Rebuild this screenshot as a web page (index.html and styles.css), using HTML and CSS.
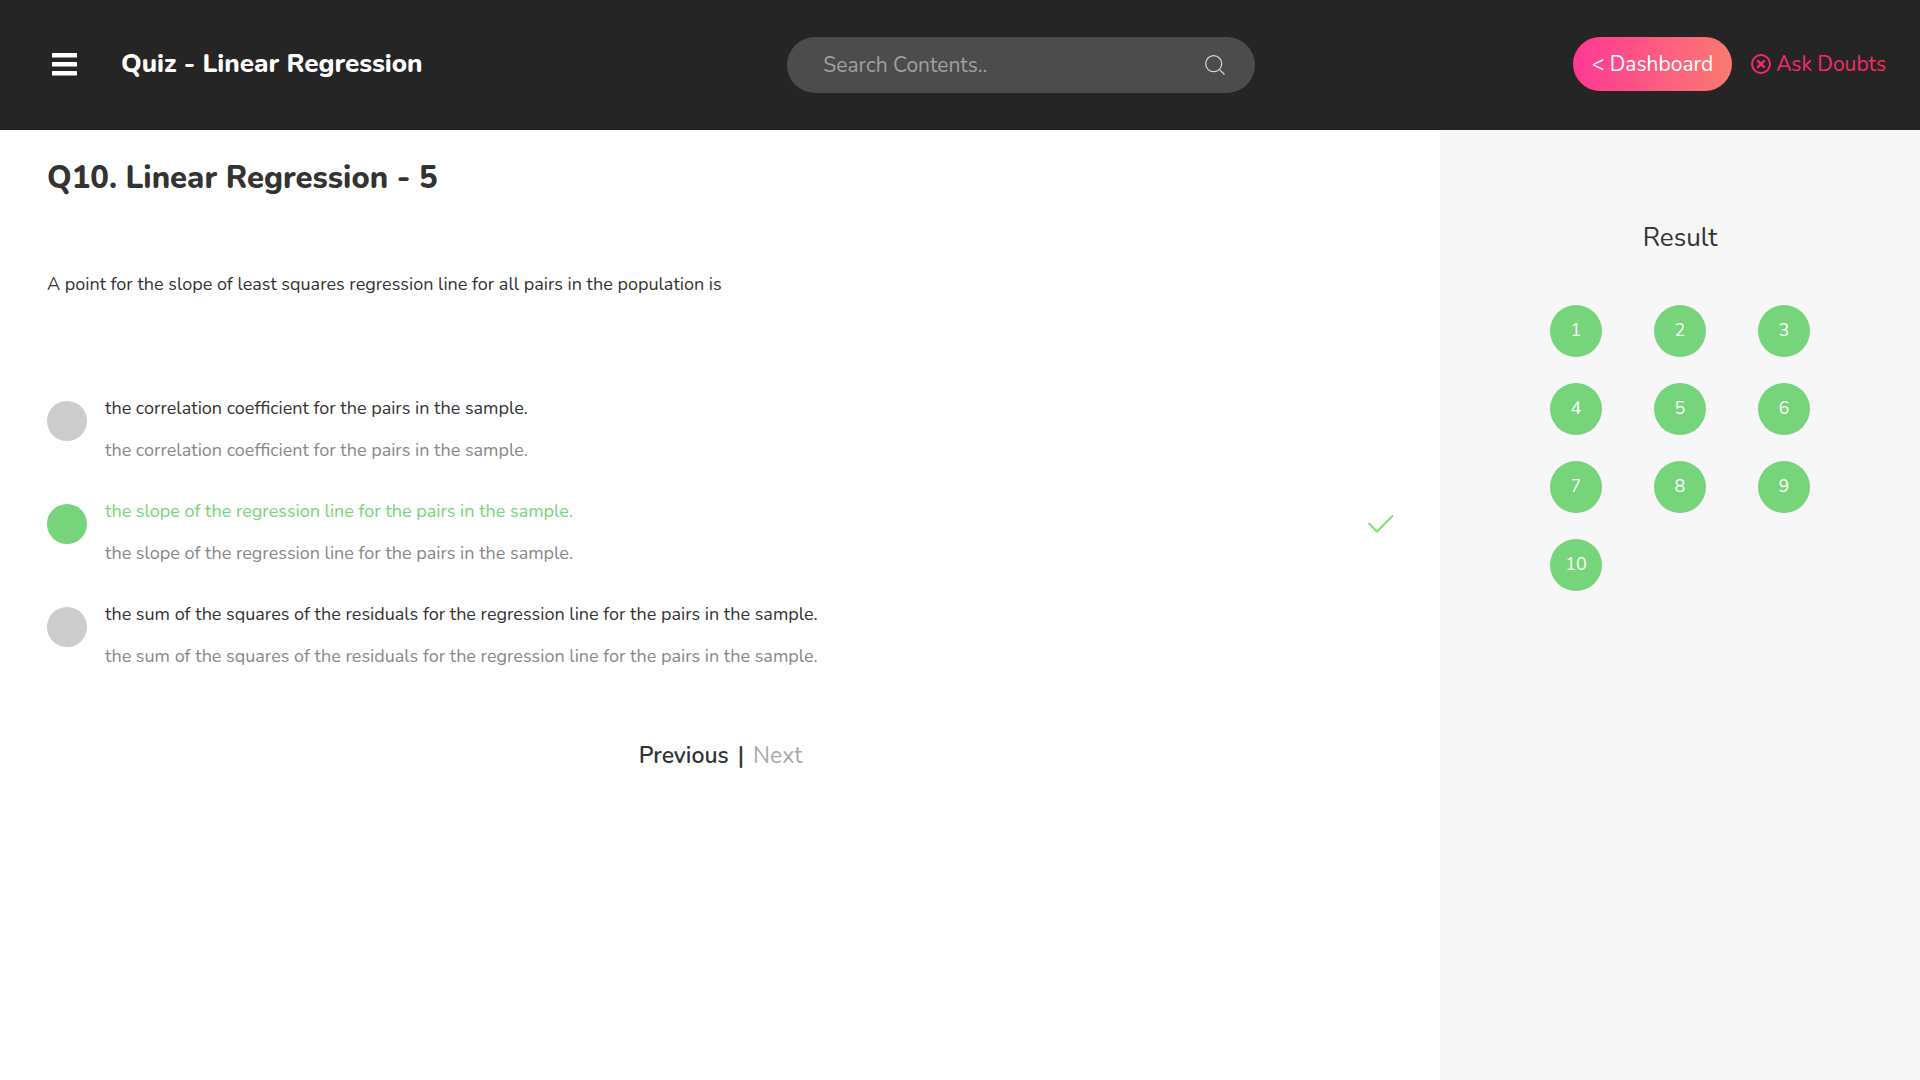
FILE: index.html
```html
<!DOCTYPE html>
<html lang="en">
<head>
<meta charset="utf-8">
<meta name="viewport" content="width=device-width, initial-scale=1">
<title>Quiz - Linear Regression</title>
<link rel="stylesheet" href="styles.css">
</head>
<body>
<header class="topbar">
  <div class="topbar-start">
    <button class="menu-button" type="button" aria-label="Menu">
      <svg width="26" height="24" viewBox="0 0 26 24" fill="#fff" aria-hidden="true"><rect x="0" y="1" width="25" height="4.5" rx=".5"/><rect x="0" y="10" width="25" height="4.5" rx=".5"/><rect x="0" y="19" width="25" height="4.5" rx=".5"/></svg>
    </button>
    <h1 class="topbar-title">Quiz - Linear Regression</h1>
  </div>
  <form class="search" role="search">
    <input class="search-input" type="search" placeholder="Search Contents.." aria-label="Search Contents">
    <button class="search-button" type="submit" aria-label="Search">
      <svg width="20" height="20" viewBox="0 0 20 20" fill="none" stroke="#d8d8d8" stroke-width="1.2" aria-hidden="true"><circle cx="8.7" cy="8.7" r="8"/><path d="M14.3 14.3L19.5 19.5"/></svg>
    </button>
  </form>
  <nav class="topbar-end">
    <a class="dashboard-link" href="#">&lt; Dashboard</a>
    <a class="doubts-link" href="#">
      <svg width="20" height="20" viewBox="0 0 20 20" fill="none" stroke="#f72a66" aria-hidden="true"><circle cx="10" cy="10" r="9" stroke-width="2"/><path d="M6.4 6.4L13.6 13.6M13.6 6.4L6.4 13.6" stroke-width="2.4"/></svg>
      Ask Doubts</a>
  </nav>
</header>
<div class="layout">
  <main class="question">
    <h2 class="question-title">Q10. Linear Regression - 5</h2>
    <p class="question-text" id="question">A point for the slope of least squares regression line for all pairs in the population is</p>
    <div class="options" role="radiogroup" aria-labelledby="question">
      <div class="option">
        <input class="option-radio" type="radio" name="answer" id="answer-1">
        <div class="option-body">
          <label class="option-label" for="answer-1">the correlation coefficient for the pairs in the sample.</label>
          <p class="option-note">the correlation coefficient for the pairs in the sample.</p>
        </div>
      </div>
      <div class="option">
        <input class="option-radio" type="radio" name="answer" id="answer-2" checked>
        <div class="option-body">
          <label class="option-label option-label-correct" for="answer-2">the slope of the regression line for the pairs in the sample.</label>
          <p class="option-note">the slope of the regression line for the pairs in the sample.</p>
        </div>
        <svg class="option-check" width="28" height="20" viewBox="0 0 28 20" fill="none" stroke="#76e370" stroke-width="2" aria-hidden="true"><path d="M2.5 9L11 17.5L27 1.5"/></svg>
      </div>
      <div class="option">
        <input class="option-radio" type="radio" name="answer" id="answer-3">
        <div class="option-body">
          <label class="option-label" for="answer-3">the sum of the squares of the residuals for the regression line for the pairs in the sample.</label>
          <p class="option-note">the sum of the squares of the residuals for the regression line for the pairs in the sample.</p>
        </div>
      </div>
    </div>
    <nav class="pager">
      <a class="pager-previous" href="#">Previous</a>
      <span class="pager-divider">|</span>
      <a class="pager-next" href="#">Next</a>
    </nav>
  </main>
  <aside class="result">
    <h2 class="result-title">Result</h2>
    <div class="result-grid">
      <a class="result-item" href="#">1</a>
      <a class="result-item" href="#">2</a>
      <a class="result-item" href="#">3</a>
      <a class="result-item" href="#">4</a>
      <a class="result-item" href="#">5</a>
      <a class="result-item" href="#">6</a>
      <a class="result-item" href="#">7</a>
      <a class="result-item" href="#">8</a>
      <a class="result-item" href="#">9</a>
      <a class="result-item" href="#">10</a>
    </div>
  </aside>
</div>
</body>
</html>
```
FILE: styles.css
```css
* {
  box-sizing: border-box;
}

body {
  display: flex;
  flex-direction: column;
  min-height: 100vh;
  margin: 0;
  background: #fff;
  color: #333;
  font-family: Nunito, Lato, sans-serif;
  font-size: 18px;
  line-height: 24px;
}

h1, h2, p {
  margin: 0;
}

a {
  color: inherit;
  text-decoration: none;
}

button {
  padding: 0;
  border: 0;
  background: none;
  cursor: pointer;
}

svg {
  display: block;
  flex: none;
}

.topbar {
  display: grid;
  grid-template-columns: 63fr 40fr 54fr;
  align-items: start;
  padding: 37px 34px 37px 51px;
  background: #252525;
}

.topbar-start {
  display: flex;
  align-items: center;
  gap: 43px;
  height: 54px;
  padding-left: 1px;
}

.topbar-title {
  color: #fff;
  font-size: 26px;
  font-weight: 800;
  line-height: 32px;
}

.search {
  display: flex;
  align-items: center;
  height: 56px;
  padding: 0 30px 0 36px;
  border-radius: 28px;
  background: #4c4c4c;
}

.search-input {
  flex: 1;
  min-width: 0;
  padding: 0;
  border: 0;
  outline: 0;
  background: none;
  color: #fff;
  font: inherit;
  font-size: 21px;
}

.search-input::placeholder {
  color: #a0a0a0;
}

.topbar-end {
  display: flex;
  align-items: center;
  justify-content: flex-end;
  gap: 19px;
  font-size: 21px;
}

.dashboard-link {
  padding: 15px 19px;
  border-radius: 27px;
  background: linear-gradient(to right, #ff3895, #fb7a70);
  color: #fff;
}

.doubts-link {
  display: flex;
  align-items: center;
  gap: 5px;
  color: #f72a66;
}

.layout {
  display: grid;
  grid-template-columns: 3fr 1fr;
  flex: 1;
}

.question {
  padding: 32px 46px 32px 47px;
}

.question-title {
  font-size: 31px;
  font-weight: 800;
  line-height: 32px;
}

.question-text {
  margin-top: 78px;
}

.options {
  display: grid;
  gap: 37px;
  margin-top: 100px;
}

.option {
  display: flex;
  gap: 18px;
}

.option-radio {
  flex: none;
  width: 40px;
  height: 40px;
  margin: 5px 0 0;
  border-radius: 50%;
  appearance: none;
  background: #ccc;
}

.option-radio:checked {
  background: #76d47b;
}

.option-body {
  flex: 1;
}

.option-label {
  display: block;
}

.option-label-correct {
  color: #76d47b;
}

.option-note {
  margin-top: 18px;
  color: #888;
}

.option-check {
  margin-top: 15px;
}

.pager {
  display: flex;
  justify-content: center;
  gap: 9px;
  margin-top: 76px;
  font-size: 23px;
  font-weight: 600;
}

.pager-next {
  color: #aaa;
  font-weight: 400;
}

.result {
  padding: 92px 24px 24px;
  background: #f7f7f7;
}

.result-title {
  font-size: 26px;
  font-weight: 400;
  line-height: 32px;
  text-align: center;
}

.result-grid {
  display: grid;
  grid-template-columns: repeat(3, 52px);
  gap: 26px 52px;
  justify-content: center;
  margin-top: 51px;
}

.result-item {
  height: 52px;
  border-radius: 50%;
  background: #76d47b;
  color: #fff;
  line-height: 50px;
  text-align: center;
}
```
